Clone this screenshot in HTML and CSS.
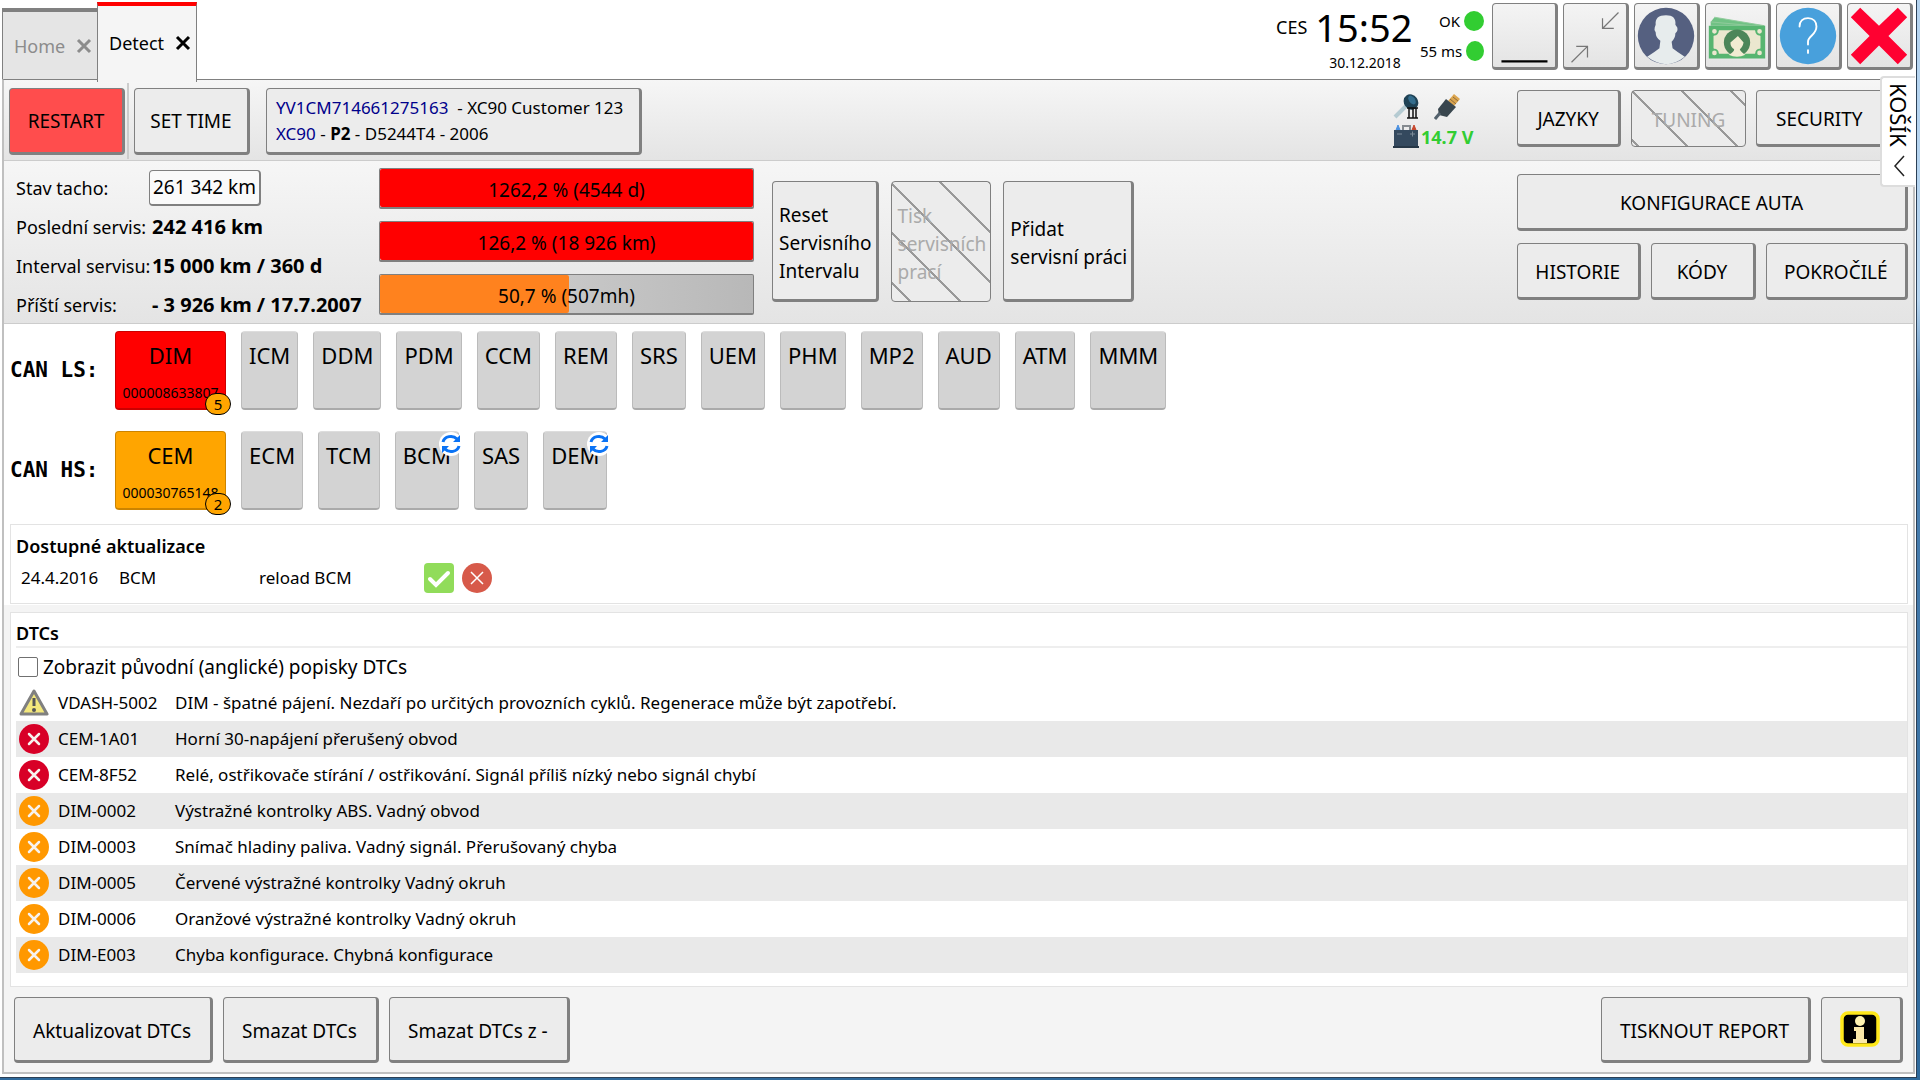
FILE: index.html
```html
<!DOCTYPE html>
<html lang="cs">
<head>
    <meta charset="UTF-8">
    <meta name="viewport" content="width=device-width, initial-scale=1.0">
    <title>Detect</title>
    <link rel="stylesheet" href="styles.css">
</head>
<body>
<div class="window">

    <!-- Tabs, clock, window buttons -->
    <header class="topbar">
        <nav class="tabs">
            <div class="tab"><a href="#">Home</a><button class="tab-close" aria-label="Close Home"><svg width="16" height="16" viewBox="0 0 16 16"><path d="M2 2L14 14M14 2L2 14"/></svg></button></div>
            <div class="tab active"><a href="#">Detect</a><button class="tab-close" aria-label="Close Detect"><svg width="16" height="16" viewBox="0 0 16 16"><path d="M2 2L14 14M14 2L2 14"/></svg></button></div>
        </nav>
        <div class="clock">
            <div class="clock-time"><span>CES</span><strong>15:52</strong></div>
            <div class="clock-date">30.12.2018</div>
        </div>
        <div class="status">
            <div>OK<i class="dot"></i></div>
            <div>55 ms<i class="dot"></i></div>
        </div>
        <div class="win-buttons">
            <button class="btn" aria-label="Minimize"><svg viewBox="0 0 66 66"><path d="M9 60H58" stroke="#000" stroke-width="2.5"/></svg></button>
            <button class="btn" aria-label="Restore"><svg viewBox="0 0 66 66" fill="none" stroke="#777" stroke-width="1.3"><path d="M58 8L41 25M41 14V25H53M8 61L25 44M13 44H25V56"/></svg></button>
            <button class="btn" aria-label="User"><svg viewBox="0 0 66 66"><circle cx="33" cy="33" r="30" fill="#556080"/><path d="M13 55Q21 50 26 46L27 38Q22 35 22 29Q20 27 21 24L22 21Q21 11 33 11Q44 11 43 21L45 24Q46 28 43 30Q43 35 39 39L40 46Q45 50 53 55Q43 63 33 63Q22 62 13 55Z" fill="#e7eced"/></svg></button>
            <button class="btn" aria-label="Money"><svg viewBox="0 0 66 66"><path d="M9 13L63 22H5V18Z" fill="#71c285"/><path d="M5 18L60 23M9 13L62 22" stroke="#91cb9c"/><path d="M3 22H63V57H3Z" fill="#57b570"/><path d="M14 27H52L58 33V46L52 52H14L8 46V33Z" fill="#ebe7cf"/><g fill="#ebe7cf" stroke="#57b570" stroke-width="2"><circle cx="9" cy="28" r="3.5"/><circle cx="57" cy="28" r="3.5"/><circle cx="9" cy="51" r="3.5"/><circle cx="57" cy="51" r="3.5"/></g><circle cx="33" cy="40" r="14" fill="#4c8659"/><path d="M24 53Q30 50 30 47Q26 45 26 40L34 33L40 40Q39 45 36 47Q37 50 42 53Q33 57 24 53Z" fill="#f1ecd2"/></svg></button>
            <button class="btn" aria-label="Help"><svg viewBox="0 0 66 66"><circle cx="33" cy="33" r="30" fill="#48a0dc"/><path d="M24 23C24 17 28 14 33 14C39 14 42 18 42 23C42 32 33 33 33 39V42M33 48V51" fill="none" stroke="#fff" stroke-width="2" stroke-linecap="round"/></svg></button>
            <button class="btn" aria-label="Close"><svg viewBox="0 0 66 66"><path d="M13 3L33 22L53 3L63 13L43 33L63 53L53 63L33 43L13 63L3 53L23 33L3 13Z" fill="#ff0131"/></svg></button>
        </div>
    </header>

    <main>
        <section class="toolbar">
            <button class="btn restart">RESTART</button>
            <button class="btn set-time">SET TIME</button>
            <button class="btn vin"><span class="blue">YV1CM714661275163</span> &nbsp;- XC90 Customer 123<br><span class="blue">XC90</span> - <b>P2</b> - D5244T4 - 2006</button>

            <div class="sensors">
                <div class="sensor-row">
                    <svg width="26" height="26" viewBox="0 0 26 26"><path d="M2 23L13 12" stroke="#b5cbd2" stroke-width="4"/><ellipse cx="18" cy="8" rx="7" ry="8" transform="rotate(-35 18 8)" fill="#1f4255"/><ellipse cx="19" cy="6" rx="3" ry="5" transform="rotate(-35 19 6)" fill="#346d8d"/><path d="M14 14H25M14 24H25M16 14V24M20 14V24M23 14V24" stroke="#111" stroke-width="1.5"/></svg>
                    <svg width="26" height="26" viewBox="0 0 26 26"><path d="M14 7L20 0L26 5L20 12Z" fill="#dca650"/><path d="M16 5L22 10M19 3L24 7" stroke="#8d6b3c"/><path d="M12 5L22 13L13 23L5 21L4 15Z" fill="#39464e"/><path d="M6 19L1 25" stroke="#54626d" stroke-width="3"/></svg>
                </div>
                <div class="sensor-row volt">
                    <svg width="26" height="26" viewBox="0 0 26 26"><path d="M3 6L5 1L7 6Z" fill="#4c91e0" stroke="#4c91e0"/><path d="M19 6L21 1L23 6Z" fill="#c7482f" stroke="#c7482f"/><path d="M10 6V2H17V6" fill="none" stroke="#858b90" stroke-width="2"/><path d="M1 6H25V22H1Z" fill="#34495e"/><path d="M0 22H26V24H0Z" fill="#263747"/><path d="M4 10H9M17 10H22M19.5 7.500V12.500" stroke="#7c8b99"/></svg>
                    <span>14.7 V</span>
                </div>
            </div>
            <div class="side side-top">
                <button class="btn">JAZYKY</button>
                <button class="btn striped tuning" disabled>TUNING</button>
                <button class="btn">SECURITY</button>
            </div>
        </section>

        <section class="service">
            <div class="odo">
                <label for="tacho">Stav tacho:</label><input id="tacho" type="text" value="261 342 km">
                <span>Poslední servis:</span><b>242 416 km</b>
                <span>Interval servisu:</span><b>15 000 km / 360 d</b>
                <span>Příští servis:</span><b>- 3 926 km / 17.7.2007</b>
            </div>
            <div class="bars">
                <div class="bar" role="progressbar" aria-valuenow="100"><div class="fill over" style="width: 100%"></div><span>1262,2 % (4544 d)</span></div>
                <div class="bar" role="progressbar" aria-valuenow="100"><div class="fill over" style="width: 100%"></div><span>126,2 % (18 926 km)</span></div>
                <div class="bar" role="progressbar" aria-valuenow="51"><div class="fill" style="width: 50.7%"></div><span>50,7 % (507mh)</span></div>
            </div>
            <div class="service-buttons">
                <button class="btn">Reset<br>Servisního<br>Intervalu</button>
                <button class="btn striped" disabled>Tisk<br>servisních<br>prací</button>
                <button class="btn">Přidat<br>servisní práci</button>
            </div>
            <div class="side side-grid">
                <button class="btn wide">KONFIGURACE AUTA</button>
                <button class="btn">HISTORIE</button>
                <button class="btn">KÓDY</button>
                <button class="btn">POKROČILÉ</button>
            </div>
        </section>

        <!-- ECU modules -->
        <section class="modules">
            <div class="bus">
                <div class="bus-name">CAN LS:</div>
                <button class="ecu red">DIM<small>000008633807</small><span class="count">5</span></button>
                <button class="ecu">ICM</button>
                <button class="ecu">DDM</button>
                <button class="ecu">PDM</button>
                <button class="ecu">CCM</button>
                <button class="ecu">REM</button>
                <button class="ecu">SRS</button>
                <button class="ecu">UEM</button>
                <button class="ecu">PHM</button>
                <button class="ecu">MP2</button>
                <button class="ecu">AUD</button>
                <button class="ecu">ATM</button>
                <button class="ecu">MMM</button>
            </div>
            <div class="bus">
                <div class="bus-name">CAN HS:</div>
                <button class="ecu orange">CEM<small>000030765148</small><span class="count">2</span></button>
                <button class="ecu">ECM</button>
                <button class="ecu">TCM</button>
                <button class="ecu">BCM<svg class="sync" viewBox="0 0 24 24"><use href="#sync"/></svg></button>
                <button class="ecu">SAS</button>
                <button class="ecu">DEM<svg class="sync" viewBox="0 0 24 24"><use href="#sync"/></svg></button>
            </div>

            <div class="panel updates">
                <h2>Dostupné aktualizace</h2>
                <div class="update">
                    <span class="update-date">24.4.2016</span>
                    <span class="update-ecu">BCM</span>
                    <span class="update-text">reload BCM</span>
                    <button class="icon-btn" aria-label="Potvrdit"><svg width="30" height="30" viewBox="0 0 30 30"><rect width="30" height="30" rx="4" fill="#91dc5a"/><path d="M6 16L12 22L24 10" fill="none" stroke="#fff" stroke-width="4" stroke-linecap="round"/></svg></button>
                    <button class="icon-btn" aria-label="Zamítnout"><svg width="30" height="30" viewBox="0 0 30 30"><circle cx="15" cy="15" r="15" fill="#d75a4a"/><path d="M9 9L21 21M21 9L9 21" stroke="#fff" stroke-width="1.5"/></svg></button>
                </div>
            </div>
        </section>

        <section class="panel dtcs">
            <h2>DTCs</h2>
            <label class="check"><input type="checkbox">Zobrazit původní (anglické) popisky DTCs</label>
            <table>
                <tr><td><svg width="30" height="30" viewBox="0 0 30 30"><path d="M15 3L28 26H2Z" fill="#f3e77c" stroke="#808080" stroke-width="3" stroke-linejoin="round"/><path d="M15 10V18" stroke="#555" stroke-width="3"/><circle cx="15" cy="22" r="2" fill="#555"/></svg></td><td>VDASH-5002</td><td>DIM - špatné pájení. Nezdaří po určitých provozních cyklů. Regenerace může být zapotřebí.</td></tr>
                <tr><td><svg class="err" width="30" height="30" viewBox="0 0 30 30"><use href="#cross"/></svg></td><td>CEM-1A01</td><td>Horní 30-napájení přerušený obvod</td></tr>
                <tr><td><svg class="err" width="30" height="30" viewBox="0 0 30 30"><use href="#cross"/></svg></td><td>CEM-8F52</td><td>Relé, ostřikovače stírání / ostřikování. Signál příliš nízký nebo signál chybí</td></tr>
                <tr><td><svg class="warn" width="30" height="30" viewBox="0 0 30 30"><use href="#cross"/></svg></td><td>DIM-0002</td><td>Výstražné kontrolky ABS. Vadný obvod</td></tr>
                <tr><td><svg class="warn" width="30" height="30" viewBox="0 0 30 30"><use href="#cross"/></svg></td><td>DIM-0003</td><td>Snímač hladiny paliva. Vadný signál. Přerušovaný chyba</td></tr>
                <tr><td><svg class="warn" width="30" height="30" viewBox="0 0 30 30"><use href="#cross"/></svg></td><td>DIM-0005</td><td>Červené výstražné kontrolky Vadný okruh</td></tr>
                <tr><td><svg class="warn" width="30" height="30" viewBox="0 0 30 30"><use href="#cross"/></svg></td><td>DIM-0006</td><td>Oranžové výstražné kontrolky Vadný okruh</td></tr>
                <tr><td><svg class="warn" width="30" height="30" viewBox="0 0 30 30"><use href="#cross"/></svg></td><td>DIM-E003</td><td>Chyba konfigurace. Chybná konfigurace</td></tr>
            </table>
        </section>

        <footer class="actions">
            <button class="btn">Aktualizovat DTCs</button>
            <button class="btn">Smazat DTCs</button>
            <button class="btn">Smazat DTCs z -</button>
            <button class="btn report">TISKNOUT REPORT</button>
            <button class="btn info" aria-label="Info"><svg width="40" height="36" viewBox="0 0 40 36"><rect x="2" y="2" width="36" height="32" rx="6" fill="#000" stroke="#ffe81a" stroke-width="3.5"/><circle cx="20" cy="10" r="5" fill="#fff3b0"/><path d="M14 16H24V28H27V32H13V28H16V20H14Z" fill="#fbe9a8"/></svg></button>
        </footer>
    </main>

    <!-- Cart drawer handle -->
    <button class="cart">KOŠÍK<svg width="12" height="22" viewBox="0 0 12 22"><path d="M11 1L2 11L11 21" fill="none" stroke="#222" stroke-width="1.5"/></svg></button>
</div>

<svg class="defs">
    <symbol id="cross" viewBox="0 0 30 30"><circle cx="15" cy="15" r="15"/><path d="M10 10L20 20M20 10L10 20" stroke="#f7f2ee" stroke-width="2.5" stroke-linecap="round"/></symbol>
    <symbol id="sync" viewBox="0 0 24 24"><circle cx="12" cy="12" r="12" fill="#fff"/><path d="M4 10A8 7 0 0 1 18 7M20 14A8 7 0 0 1 6 17" fill="none" stroke="#0a73f5" stroke-width="3"/><path d="M21 3V10H14ZM3 21V14H10Z" fill="#0a73f5"/></symbol>
</svg>
</body>
</html>
```
FILE: styles.css
```css
* {
    box-sizing: border-box;
}

body {
    margin: 0;
    padding: 0 3px 3px 0;
    font-family: "Noto Sans", "Open Sans", sans-serif;
    font-size: 18px;
    line-height: 24px;
    color: #000;
    background: linear-gradient(to bottom, #b4d3ef 0, #b4d3ef 300px, #4a7fb0 400px, #2f6a9c 100%);
}

button, input {
    font: inherit;
    color: inherit;
}

svg {
    display: block;
}

.defs {
    position: absolute;
    width: 0;
    height: 0;
}

.window {
    position: relative;
    display: flex;
    flex-direction: column;
    min-height: calc(100vh - 3px);
    padding: 0 1px 3px 2px;
    background: #fff;
    border-right: 1px solid #2b3f55;
    border-bottom: 1px solid #2b3f55;
}

.btn {
    padding: 0;
    font-size: 19px;
    text-align: center;
    background: #ececec;
    border: solid #808080;
    border-width: 1px 3px 3px 1px;
    border-radius: 4px;
}

.striped {
    --shift: 12px;
    color: #aaa;
    border-width: 1px;
    background: repeating-linear-gradient(45deg, #ececec 0, #ececec var(--shift), #999 var(--shift), #999 calc(var(--shift) + 2px), #ececec calc(var(--shift) + 2px), #ececec 35px);
}

/* === Top bar === */
.topbar {
    display: flex;
    height: 79px;
}

.tabs {
    display: flex;
    align-items: flex-end;
    margin-right: auto;
}

.tab {
    display: flex;
    align-items: center;
    justify-content: space-between;
    width: 95px;
    height: 71px;
    padding: 0 5px 0 11px;
    color: #8c8c8c;
    background: #e5e5e5;
    border-left: 1px solid #808080;
    border-top: 4px solid #808080;
}

.tab.active {
    position: relative;
    z-index: 1;
    width: 100px;
    height: 80px;
    margin-bottom: -3px;
    padding: 0 5px 3px 11px;
    color: #000;
    background: #f5f5f5;
    border-top-color: #f00;
    border-right: 1px solid #808080;
}

.tab a {
    color: inherit;
    text-decoration: none;
}

.tab-close {
    padding: 0;
    border: 0;
    background: none;
}

.tab-close path {
    stroke: currentColor;
    stroke-width: 3;
}

.clock {
    width: 144px;
    text-align: center;
}

.clock-time {
    display: flex;
    align-items: center;
    gap: 8px;
    height: 54px;
}

.clock-time strong {
    font-size: 38px;
    font-weight: normal;
}

.clock-date {
    padding-left: 34px;
    font-size: 14px;
    line-height: 18px;
}

.status {
    display: flex;
    flex-direction: column;
    gap: 6px;
    width: 64px;
    padding-top: 9px;
    font-size: 15px;
}

.status div {
    display: flex;
    align-items: center;
    justify-content: flex-end;
    gap: 4px;
    white-space: nowrap;
}

.dot {
    width: 20px;
    height: 20px;
    border-radius: 50%;
    background: #32cd32;
}

.win-buttons {
    display: flex;
    gap: 5px;
    padding: 3px 2px 0 8px;
}

.win-buttons .btn {
    width: 66px;
    height: 67px;
    background: linear-gradient(#f4f4f4, #e4e4e4);
}

/* === Main frame === */
main {
    flex: 1;
    display: flex;
    flex-direction: column;
    background: #f4f4f4;
    border: 2px solid #c0c0c0;
    border-top: 1px solid #808080;
}

.toolbar, .service {
    display: flex;
    background: linear-gradient(#f6f6f6, #e4e4e4);
    border-bottom: 1px solid #ccc;
}

.toolbar {
    height: 81px;
    padding: 8px 5px 5px;
}

.toolbar > .btn {
    height: 67px;
}

.restart {
    width: 116px;
    background: #ff4d4d;
}

.set-time {
    position: relative;
    width: 116px;
    margin-left: 9px;
}

.set-time::before {
    content: "";
    position: absolute;
    top: -6px;
    left: -8px;
    height: 76px;
    border-left: 2px solid #ccc;
}

.toolbar > .vin {
    width: 376px;
    margin-left: 16px;
    padding: 0 0 0 9px;
    text-align: left;
    font-size: 17px;
    line-height: 26px;
    white-space: nowrap;
}

.blue {
    color: #00008b;
}

.sensors {
    width: 124px;
    margin-left: auto;
    padding-top: 4px;
}

.sensor-row {
    display: flex;
    align-items: center;
    gap: 15px;
    height: 30px;
}

.volt {
    gap: 2px;
    font-weight: bold;
    color: #32cd32;
}

.side {
    width: 391px;
}

.side .btn {
    padding-top: 2px;
}

.side-top {
    display: flex;
    gap: 10px;
    padding: 2px 23px 8px 0;
}

.side-top .btn {
    flex: 1 1 auto;
}

.tuning {
    --shift: 3px;
}

/* === Service interval === */
.service {
    height: 163px;
    padding: 7px 5px 5px;
}

.odo {
    display: grid;
    grid-template-columns: 136px 1fr;
    grid-auto-rows: 39px;
    align-items: center;
    width: 370px;
    padding-left: 7px;
    white-space: nowrap;
}

.odo b {
    font-size: 20px;
}

.odo input {
    width: 112px;
    height: 36px;
    margin-left: -3px;
    padding: 0 3px;
    font-size: 19px;
    background: #fafafa;
    border: solid #808080;
    border-width: 1px 2px 2px 1px;
    border-radius: 4px;
}

.bars {
    display: flex;
    flex-direction: column;
    gap: 12px;
    width: 375px;
}

.bar {
    position: relative;
    height: 41px;
    font-size: 19px;
    text-align: center;
    line-height: 42px;
    background: linear-gradient(to right, #d8d8d8, #b8b8b8);
    border: 1px solid #808080;
    border-bottom-width: 2px;
    border-radius: 2px;
}

.fill {
    position: absolute;
    top: 0;
    bottom: 0;
    left: 0;
    background: #ff821e;
    border-radius: 2px;
}

.over {
    background: #f00;
}

.bar span {
    position: relative;
}

.service-buttons {
    display: flex;
    gap: 12px;
    margin-right: auto;
    padding: 13px 0 16px 18px;
}

.service-buttons .btn {
    padding: 4px 4px 0 6px;
    text-align: left;
    line-height: 28px;
}

.side-grid {
    display: flex;
    flex-wrap: wrap;
    align-content: flex-start;
    gap: 12px 10px;
    padding-top: 6px;
}

.side-grid .btn {
    flex: 1 1 auto;
    min-width: 105px;
    height: 57px;
}

.side-grid .wide {
    flex-basis: 100%;
}

/* === ECU modules === */
.modules {
    padding: 7px 5px 0;
    background: #fff;
}

.bus {
    display: flex;
    gap: 15px;
    height: 79px;
    margin-bottom: 21px;
}

.bus-name {
    width: 91px;
    padding-left: 1px;
    font: bold 21px/78px "DejaVu Sans Mono", monospace;
}

.ecu {
    position: relative;
    display: flex;
    flex-direction: column;
    align-items: center;
    padding: 7px;
    font-size: 22px;
    line-height: 32px;
    background: #d3d3d3;
    border: 1px solid #bbb;
    border-top-color: #ddd;
    border-bottom: 2px solid #aaa;
    border-radius: 4px;
}

.ecu.red, .ecu.orange {
    width: 111px;
    border-color: rgba(0, 0, 0, 0.2);
}

.red {
    background: #f00;
}

.orange {
    background: #ffa500;
}

.ecu small {
    padding-top: 10px;
    font-size: 14px;
    line-height: 24px;
}

.count {
    position: absolute;
    right: -6px;
    bottom: -7px;
    width: 26px;
    height: 22px;
    font-size: 15px;
    line-height: 20px;
    text-align: center;
    background: #ffa500;
    border: 1px solid #000;
    border-radius: 11px;
}

.sync {
    position: absolute;
    top: 0;
    right: -5px;
    width: 24px;
    height: 24px;
}

/* === Panels === */
.panel {
    background: #fff;
    border: 1px solid #e3e3e3;
}

.panel h2 {
    margin: 0;
    font-size: 18px;
    font-weight: 600;
}

.updates {
    margin: -7px 0 1px 1px;
    padding: 9px 5px;
    height: 80px;
}

.update {
    display: flex;
    align-items: center;
    height: 40px;
    padding-left: 5px;
    font-size: 17px;
}

.update-date {
    width: 98px;
}

.update-ecu {
    width: 140px;
}

.update-text {
    width: 165px;
}

.icon-btn {
    margin-right: 8px;
    padding: 0;
    background: none;
    border: 0;
}

.dtcs {
    margin: 7px 5px 0 6px;
    padding: 8px 0 13px 5px;
}

.dtcs h2 {
    border-bottom: 2px solid #eee;
    height: 27px;
}

.check {
    display: flex;
    align-items: center;
    height: 37px;
    font-size: 19px;
}

.check input {
    appearance: none;
    width: 20px;
    height: 20px;
    margin: 0 5px 0 2px;
    background: #fff;
    border: 1px solid #707070;
    border-radius: 2px;
}

table {
    width: 100%;
    border-collapse: collapse;
    font-size: 17px;
}

tr:nth-child(even) {
    background: #e9e9e9;
}

td {
    height: 36px;
    padding: 0 0 0 3px;
}

td:first-child {
    width: 39px;
}

td:nth-child(2) {
    width: 117px;
}

.err {
    fill: #d80027;
}

.warn {
    fill: #ff9800;
}

/* === Bottom buttons === */
.actions {
    display: flex;
    gap: 10px;
    padding: 10px 10px 9px;
}

.actions .btn {
    height: 66px;
    padding: 3px 19px 0 18px;
}

.actions .report {
    margin-left: auto;
}

.actions .info {
    width: 82px;
    padding-top: 0;
}

.cart {
    position: absolute;
    top: 76px;
    right: 1px;
    display: flex;
    align-items: center;
    gap: 8px;
    height: 111px;
    padding: 5px 4px 5px 5px;
    font-size: 22px;
    writing-mode: vertical-rl;
    background: #fff;
    border: 2px solid #ddd;
    border-right: 0;
    border-radius: 4px 0 0 4px;
}
```
